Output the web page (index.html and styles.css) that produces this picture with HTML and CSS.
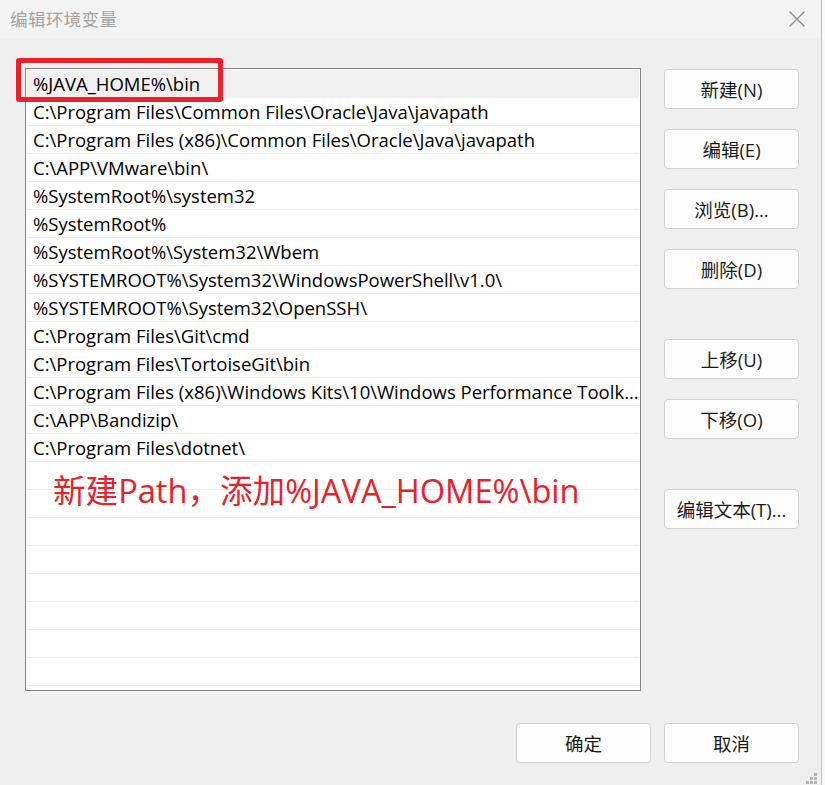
FILE: index.html
```html
<!DOCTYPE html>
<html lang="zh-CN">
<head>
<meta charset="utf-8">
<title>编辑环境变量</title>
<link rel="stylesheet" href="styles.css">
</head>
<body>
<div class="screen">
  <div class="window">
    <div class="titlebar">
      <span class="title">编辑环境变量</span>
      <svg class="close" width="18" height="18" viewBox="0 0 18 18"><path d="M1.5 1.5 L16.5 16.5 M16.5 1.5 L1.5 16.5" stroke="#8a8a8a" stroke-width="1.3" fill="none"/></svg>
    </div>
    <div class="content">
      <div class="main">
        <div class="listbox">
          <div class="row selected">%JAVA_HOME%\bin</div>
          <div class="row">C:\Program Files\Common Files\Oracle\Java\javapath</div>
          <div class="row">C:\Program Files (x86)\Common Files\Oracle\Java\javapath</div>
          <div class="row">C:\APP\VMware\bin\</div>
          <div class="row">%SystemRoot%\system32</div>
          <div class="row">%SystemRoot%</div>
          <div class="row">%SystemRoot%\System32\Wbem</div>
          <div class="row">%SYSTEMROOT%\System32\WindowsPowerShell\v1.0\</div>
          <div class="row">%SYSTEMROOT%\System32\OpenSSH\</div>
          <div class="row">C:\Program Files\Git\cmd</div>
          <div class="row">C:\Program Files\TortoiseGit\bin</div>
          <div class="row">C:\Program Files (x86)\Windows Kits\10\Windows Performance Toolk...</div>
          <div class="row">C:\APP\Bandizip\</div>
          <div class="row">C:\Program Files\dotnet\</div>
          <div class="row"></div>
          <div class="row"></div>
          <div class="row"></div>
          <div class="row"></div>
          <div class="row"></div>
          <div class="row"></div>
          <div class="row"></div>
          <div class="row"></div>
          <div class="highlight"></div>
          <div class="note">新建Path，添加%JAVA_HOME%\bin</div>
        </div>
        <div class="buttons">
          <button class="btn">新建(N)</button>
          <button class="btn">编辑(E)</button>
          <button class="btn">浏览(B)...</button>
          <button class="btn">删除(D)</button>
          <button class="btn gap-before">上移(U)</button>
          <button class="btn">下移(O)</button>
          <button class="btn gap-before">编辑文本(T)...</button>
        </div>
      </div>
      <div class="footer">
        <button class="btn">确定</button>
        <button class="btn">取消</button>
      </div>
    </div>
    <div class="grip">
      <svg width="14" height="12" viewBox="0 0 14 12"><g fill="#b4b4b4"><rect x="10" y="0" width="3" height="3"/><rect x="6" y="4" width="3" height="3"/><rect x="10" y="4" width="3" height="3"/><rect x="2" y="8" width="3" height="3"/><rect x="6" y="8" width="3" height="3"/><rect x="10" y="8" width="3" height="3"/></g></svg>
    </div>
  </div>
</div>
</body>
</html>
```
FILE: styles.css
```css
* { box-sizing: border-box; }
html, body { margin: 0; padding: 0; }
body {
  width: 825px;
  height: 785px;
  overflow: hidden;
  background: #f8f8f8;
  font-family: "Open Sans", "Noto Sans CJK SC", sans-serif;
}
.screen {
  width: 825px;
  height: 785px;
}
.window {
  position: relative;
  width: 822px;
  height: 785px;
  background: #efefef;
  border-right: 1px solid #c4c4c4;
  display: flex;
  flex-direction: column;
}
.titlebar {
  height: 38px;
  background: #f3f3f3;
  display: flex;
  align-items: center;
  justify-content: space-between;
  padding: 0 15px 2px 10px;
}
.title {
  font-family: "Noto Sans CJK SC", sans-serif;
  font-size: 17.6px;
  color: #a3a3a3;
  letter-spacing: 0.3px;
}
.close { display: block; margin-top: 2px; }
.content {
  flex: 1;
  display: flex;
  flex-direction: column;
  padding: 30px 22px 0 25px;
}
.main {
  display: flex;
  gap: 23px;
}
.listbox {
  position: relative;
  width: 616px;
  height: 623px;
  border: 1px solid #85858a;
  background: #fff;
  padding: 1px 1px 0 1px;
}
.row {
  height: 28px;
  border-bottom: 1px solid #ececec;
  padding-left: 6px;
  font-size: 18.5px;
  line-height: 27px;
  color: #000;
  white-space: nowrap;
  overflow: hidden;
}
.row.selected {
  background: #f0f0f0;
  border-bottom-color: #f0f0f0;
}
.highlight {
  position: absolute;
  left: -10px;
  top: -11px;
  width: 207px;
  height: 44px;
  border: 5px solid #e8212b;
  border-radius: 3px;
}
.note {
  position: absolute;
  left: 27px;
  top: 402px;
  font-family: "Open Sans", "Noto Sans CJK SC", sans-serif;
  font-size: 32.6px;
  line-height: 40px;
  color: #e8212b;
  white-space: nowrap;
}
.buttons {
  display: flex;
  flex-direction: column;
  gap: 20px;
  padding-top: 1px;
}
.btn {
  width: 135px;
  height: 40px;
  border: 1px solid #d0d0d0;
  border-radius: 4px;
  background: #fdfdfd;
  font-family: "Open Sans", "Noto Sans CJK SC", sans-serif;
  font-size: 18.5px;
  color: #1a1a1a;
  padding: 0;
}
.gap-before { margin-top: 30px; }
.footer {
  display: flex;
  justify-content: flex-end;
  gap: 13px;
  margin-top: 32px;
}
.grip {
  position: absolute;
  right: 3px;
  bottom: 0;
  line-height: 0;
}
```
